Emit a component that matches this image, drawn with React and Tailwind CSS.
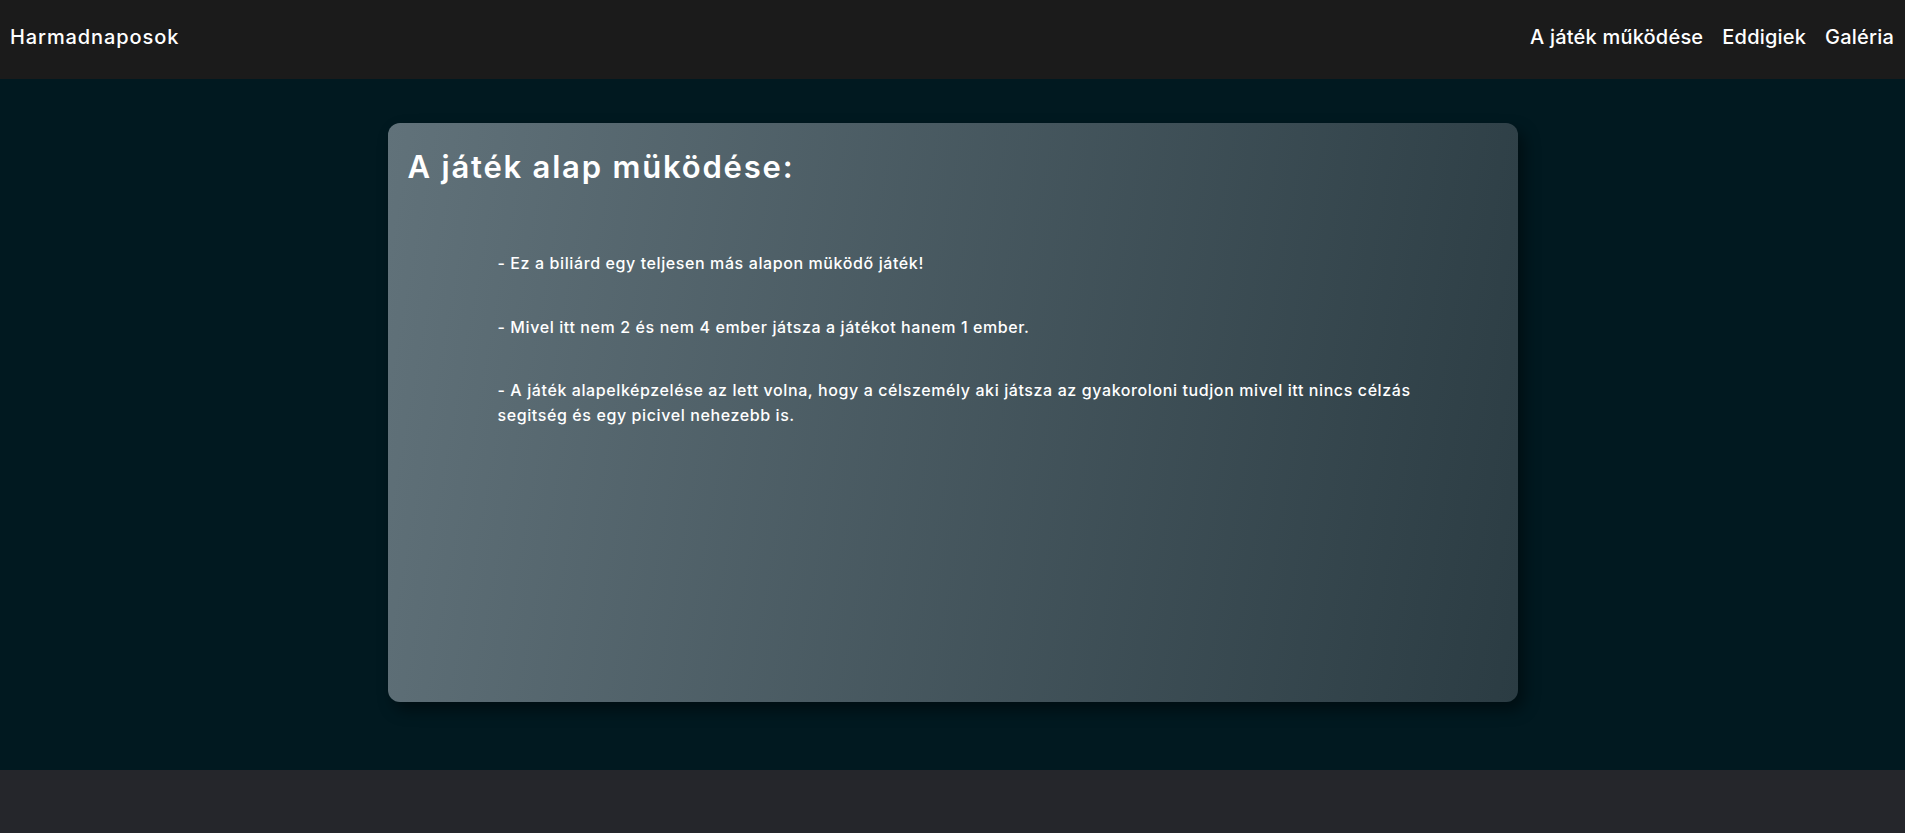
export default function App() {
  const font = { fontFamily: "Inter, 'Open Sans', sans-serif" };
  return (
    <div className="min-h-screen bg-[#25262b]" style={font}>
      <header className="flex h-[79px] items-center justify-between bg-[#1b1b1b] pb-[6px] pl-[10px] pr-[11px] text-white">
        <a className="text-[20px] font-medium tracking-[0.9px]">Harmadnaposok</a>
        <nav className="flex items-center gap-[19px] text-[20px] font-medium tracking-[0.2px]">
          <a>A játék működése</a>
          <a>Eddigiek</a>
          <a>Galéria</a>
        </nav>
      </header>

      <main className="h-[691px] bg-[#011920] pt-[44px]">
        <section className="mx-auto h-[579px] w-[1130px] rounded-xl bg-[linear-gradient(100deg,#61727a,#2b3c43)] px-[20px] pt-[22px] text-white shadow-[6px_8px_16px_rgba(0,0,0,0.45)]">
          <h1 className="text-[31px] font-semibold leading-[1.45] tracking-[1.8px]">A játék alap müködése:</h1>
          <div className="mt-[61px] pl-[90px] pr-[50px] text-[16px] font-medium leading-[25px] tracking-[0.6px]">
            <p>- Ez a biliárd egy teljesen más alapon müködő játék!</p>
            <p className="mt-[39px]">- Mivel itt nem 2 és nem 4 ember játsza a játékot hanem 1 ember.</p>
            <p className="mt-[38px]">
              - A játék alapelképzelése az lett volna, hogy a célszemély aki játsza az gyakoroloni tudjon mivel itt nincs célzás segitség és egy picivel nehezebb is.
            </p>
          </div>
        </section>
      </main>

      <footer className="h-[63px] bg-[#25262b]" />
    </div>
  );
}
